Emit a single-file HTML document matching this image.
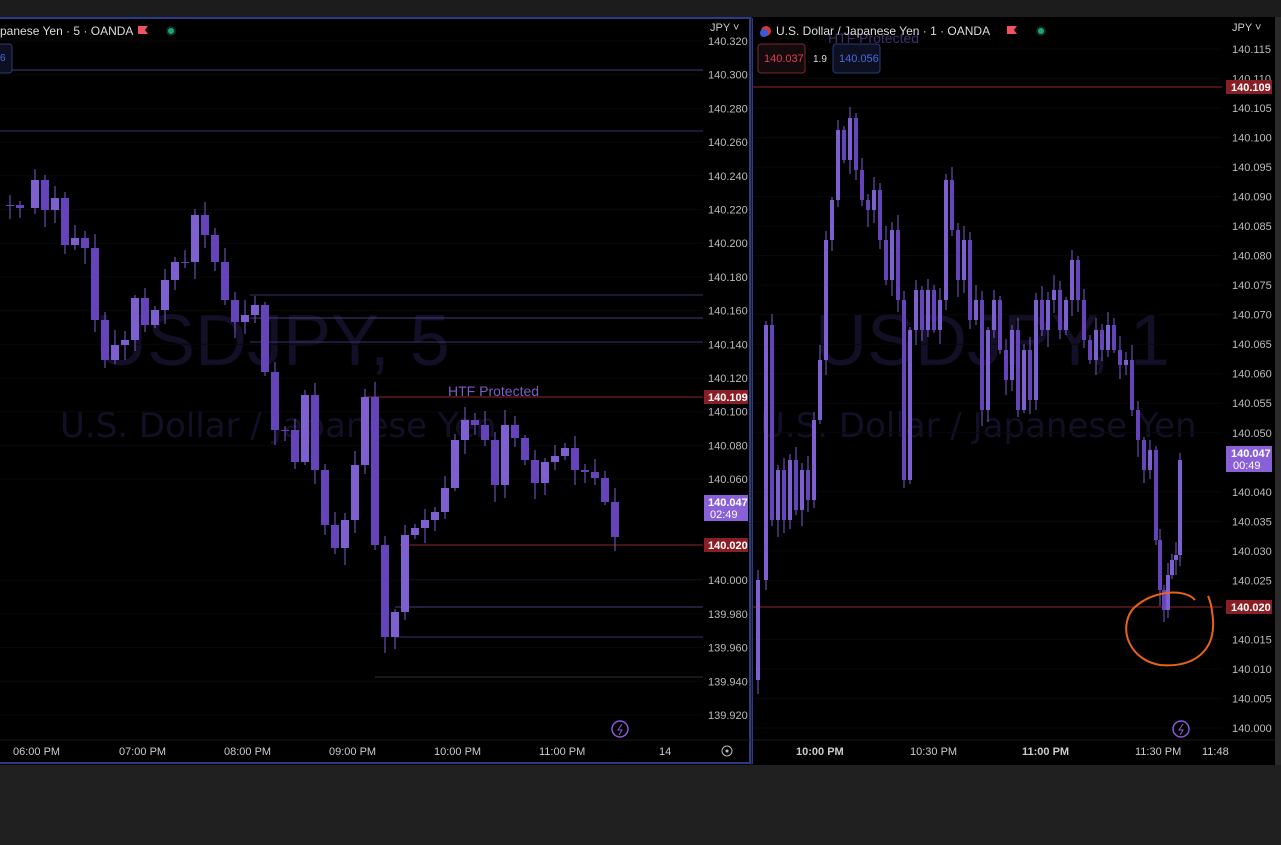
<!DOCTYPE html><html><head><meta charset="utf-8"><style>
body{margin:0;width:1281px;height:845px;background:#1f1f1f;overflow:hidden;font-family:"Liberation Sans",sans-serif;position:relative}
svg{position:absolute;left:0;top:0}
</style></head><body>
<svg id="s" width="1281" height="845" xmlns="http://www.w3.org/2000/svg" font-family="Liberation Sans, sans-serif">
<rect x="0" y="0" width="1281" height="17" fill="#1c1c1c"/>
<rect x="0" y="17" width="751" height="748" fill="#000"/>
<rect x="752" y="17" width="523" height="748" fill="#000"/>
<rect x="1275" y="17" width="6" height="750" fill="#2a2a2a"/>
<rect x="0" y="765" width="1281" height="80" fill="#202020"/>
<line x1="0" y1="18" x2="751" y2="18" stroke="#2b3a8a" stroke-width="2"/>
<line x1="750" y1="18" x2="750" y2="764" stroke="#2b3a8a" stroke-width="2"/>
<line x1="0" y1="763" x2="751" y2="763" stroke="#2b3a8a" stroke-width="2"/>
<line x1="752.5" y1="18" x2="752.5" y2="764" stroke="#2b3a8a" stroke-width="1"/>
<line x1="0" y1="740" x2="750" y2="740" stroke="#1a1a1a"/>
<line x1="753" y1="740" x2="1275" y2="740" stroke="#1a1a1a"/>
<g fill="#130f26" font-size="72"><text x="95" y="365">USDJPY, 5</text><text x="815" y="365">USDJPY, 1</text></g>
<g fill="#130f26" font-size="34" font-family="DejaVu Sans, sans-serif"><text x="60" y="437">U.S. Dollar / Japanese Yen</text><text x="760" y="437">U.S. Dollar / Japanese Yen</text></g>
<g stroke-width="1">
<line x1="0" y1="70" x2="703" y2="70" stroke="#4a3a7a"/>
<line x1="0" y1="131" x2="703" y2="131" stroke="#33336a"/>
<line x1="250" y1="295" x2="703" y2="295" stroke="#33336a"/>
<line x1="250" y1="318" x2="703" y2="318" stroke="#4a3a7a"/>
<line x1="250" y1="342" x2="703" y2="342" stroke="#33336a"/>
<line x1="365" y1="397" x2="703" y2="397" stroke="#8a2a2a"/>
<line x1="400" y1="545" x2="703" y2="545" stroke="#8a2a2a"/>
<line x1="400" y1="580" x2="703" y2="580" stroke="#33336a"/>
<line x1="395" y1="607" x2="703" y2="607" stroke="#4a3a7a"/>
<line x1="395" y1="637" x2="703" y2="637" stroke="#33336a"/>
<line x1="375" y1="677" x2="703" y2="677" stroke="#3a2a3a"/>
<line x1="753" y1="87" x2="1222" y2="87" stroke="#8a2a2a"/>
<line x1="753" y1="607" x2="1222" y2="607" stroke="#8a2a2a"/>
<line x1="753" y1="728" x2="1222" y2="728" stroke="#33336a"/>
</g>
<g id="cand"></g>
<text x="448" y="396" fill="#7a5fc0" font-size="14">HTF Protected</text>
<text x="828" y="43" fill="#3d2f6a" font-size="14">HTF Protected</text>
<path d="M1195,600 C1185,588 1150,590 1132,610 C1118,630 1130,660 1160,665 C1195,668 1215,650 1213,620 C1212,608 1210,600 1208,596" fill="none" stroke="#e8621a" stroke-width="2"/>
<g font-size="12" fill="#ddd">
<text x="0" y="35">panese Yen · 5 · OANDA</text>
<text x="776" y="35">U.S. Dollar / Japanese Yen · 1 · OANDA</text>
</g>
<path d="M138,26h10l-3,4 3,4h-10z" fill="#f0525f"/><path d="M1007,26h10l-3,4 3,4h-10z" fill="#f0525f"/>
<circle cx="171" cy="31" r="5" fill="#0f2a22"/><circle cx="171" cy="31" r="3" fill="#1fa37a"/>
<circle cx="1041" cy="31" r="5" fill="#0f2a22"/><circle cx="1041" cy="31" r="3" fill="#1fa37a"/>
<circle cx="766" cy="31" r="5" fill="#d33"/><circle cx="764" cy="33" r="4" fill="#3a5ad8"/>
<rect x="-5" y="44" width="17" height="29" rx="3" fill="#0d1020" stroke="#2a3a7a"/><text x="0" y="61" font-size="10" fill="#4a6ae0">6</text>
<rect x="758" y="44" width="47" height="29" rx="3" fill="#120a0c" stroke="#7a2a2a"/><text x="764" y="62" font-size="11" fill="#e04050">140.037</text>
<text x="813" y="62" font-size="10" fill="#ddd">1.9</text>
<rect x="833" y="44" width="47" height="29" rx="3" fill="#0d1020" stroke="#2a3a7a"/><text x="839" y="62" font-size="11" fill="#4a6ae0">140.056</text>
<g font-size="11" fill="#bbb" id="ax"></g>
<g font-size="11" fill="#ccc">
<text x="710" y="31">JPY ˅</text><text x="1232" y="31">JPY ˅</text>
<text x="13" y="755">06:00 PM</text><text x="119" y="755">07:00 PM</text><text x="224" y="755">08:00 PM</text><text x="329" y="755">09:00 PM</text><text x="434" y="755">10:00 PM</text><text x="539" y="755">11:00 PM</text><text x="659" y="755">14</text>
<text x="796" y="755" font-weight="bold">10:00 PM</text><text x="910" y="755">10:30 PM</text><text x="1022" y="755" font-weight="bold">11:00 PM</text><text x="1135" y="755">11:30 PM</text><text x="1202" y="755">11:48</text>
</g>
<circle cx="727" cy="751" r="5" fill="none" stroke="#bbb"/><circle cx="727" cy="751" r="1.5" fill="#bbb"/>
<circle cx="620" cy="729" r="8" fill="none" stroke="#8a5ad8" stroke-width="1.5"/><path d="M622,724l-4,6h4l-3,5" stroke="#8a5ad8" fill="none"/>
<circle cx="1181" cy="729" r="8" fill="none" stroke="#8a5ad8" stroke-width="1.5"/><path d="M1183,724l-4,6h4l-3,5" stroke="#8a5ad8" fill="none"/>
<g font-size="11" font-weight="bold" fill="#fff">
<rect x="704" y="390" width="44" height="14" fill="#8a1e25"/><text x="708" y="401">140.109</text>
<rect x="704" y="538" width="44" height="14" fill="#8a1e25"/><text x="708" y="549">140.020</text>
<rect x="704" y="495" width="44" height="26" fill="#8a60d8"/><text x="708" y="506">140.047</text><text x="710" y="518" font-weight="normal">02:49</text>
<rect x="1226" y="80" width="46" height="14" fill="#8a1e25"/><text x="1231" y="91">140.109</text>
<rect x="1226" y="600" width="46" height="14" fill="#8a1e25"/><text x="1231" y="611">140.020</text>
<rect x="1226" y="446" width="46" height="26" fill="#8a60d8"/><text x="1231" y="457">140.047</text><text x="1233" y="469" font-weight="normal">00:49</text>
</g>
</svg>
<script>
var ns="http://www.w3.org/2000/svg",g=document.getElementById('cand'),ax=document.getElementById('ax');
function el(t,a,p){var e=document.createElementNS(ns,t);for(var k in a)e.setAttribute(k,a[k]);(p||g).appendChild(e);return e}
function draw(pts,w){var prev=pts[0][1];for(var i=1;i<pts.length;i++){var x=pts[i][0],c=pts[i][1],o=prev,t=Math.min(o,c),b=Math.max(o,c);
var wt=t-((i*7)%13)-3,wb=b+((i*11)%15)+3;
el('line',{x1:x,x2:x,y1:wt,y2:wb,stroke:'#7a5ccc','stroke-width':1});
el('rect',{x:x-w/2,y:t,width:w,height:Math.max(1,b-t),fill:(c<o?'#7d5fd0':'#6543b8')});prev=c}}
var L=[[0,205],[10,205],[20,208],[35,180],[45,210],[55,198],[65,245],[75,238],[85,248],[95,320],[105,360],[115,345],[125,340],[135,298],[145,325],[155,310],[165,280],[175,262],[185,262],[195,215],[205,235],[215,262],[225,300],[235,322],[245,315],[255,305],[265,372],[275,430],[285,430],[295,462],[305,395],[315,470],[325,525],[335,548],[345,520],[355,465],[365,397],[375,545],[385,637],[395,612],[405,535],[415,528],[425,520],[435,512],[445,488],[455,440],[465,420],[475,425],[485,440],[495,485],[505,425],[515,438],[525,460],[535,483],[545,462],[555,456],[565,448],[575,470],[585,472],[595,478],[605,502],[615,537]];
draw(L,8);
var R=[[752,680],[758,580],[766,325],[772,520],[778,470],[784,520],[790,460],[796,510],[802,470],[808,500],[814,420],[820,360],[826,240],[832,200],[838,130],[844,160],[850,118],[856,170],[862,200],[868,210],[874,190],[880,240],[886,280],[892,230],[898,300],[904,480],[910,330],[916,290],[922,330],[928,290],[934,330],[940,300],[946,180],[952,230],[958,280],[964,240],[970,320],[976,300],[982,410],[988,330],[994,300],[1000,350],[1006,380],[1012,330],[1018,410],[1024,350],[1030,400],[1036,300],[1042,330],[1048,300],[1054,290],[1060,330],[1066,300],[1072,260],[1078,300],[1084,340],[1090,360],[1096,330],[1102,350],[1108,325],[1114,350],[1120,365],[1126,360],[1132,410],[1138,440],[1144,470],[1150,450],[1156,540],[1160,590],[1164,610],[1168,575],[1172,560],[1176,555],[1180,460]];
draw(R,4);
var lp=['140.320','140.300','140.280','140.260','140.240','140.220','140.200','140.180','140.160','140.140','140.120','140.100','140.080','140.060','140.040','140.020','140.000','139.980','139.960','139.940','139.920'];
lp.forEach(function(p,i){var y=41+i*33.7+4;if(Math.abs(y-4-397)<6||Math.abs(y-4-545)<10||Math.abs(y-4-508)<14)return;el('text',{x:708,y:y},ax).textContent=p;el('line',{x1:0,x2:703,y1:y-4,y2:y-4,stroke:'#080808'},g.parentNode.insertBefore(document.createElementNS(ns,'g'),g))});
for(var i=0;i<=23;i++){var v=(140.115-i*0.005).toFixed(3),y=49+i*29.52+4;if(Math.abs(y-4-87)<8||Math.abs(y-4-607)<8||Math.abs(y-4-459)<14)continue;el('text',{x:1232,y:y},ax).textContent=v;el('line',{x1:753,x2:1222,y1:y-4,y2:y-4,stroke:'#080808'},g.parentNode.insertBefore(document.createElementNS(ns,'g'),g))}
</script>
</body></html>
